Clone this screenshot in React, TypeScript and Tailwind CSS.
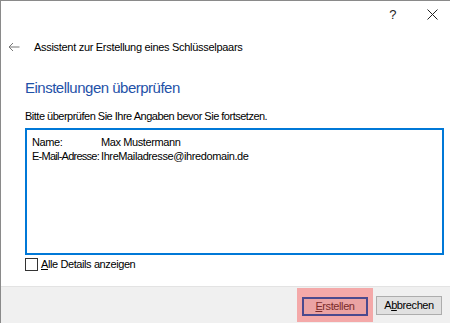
import React, { useState } from 'react';

const font = { fontFamily: '"Liberation Sans", Arial, sans-serif' };

export default function App() {
    const [showAll, setShowAll] = useState(false);

    return (
        <div style={font} className="w-[450px] h-[323px] bg-white border-t border-l border-[#8a8a8a] flex flex-col overflow-hidden text-[#000] tracking-[-0.4px]">
            {/* title bar */}
            <div className="h-[26px] flex justify-end items-center pr-[12px] gap-[31px]">
                <span className="text-[13px] text-[#222] leading-none">?</span>
                <svg width="11" height="11" viewBox="0 0 11 11" className="text-[#222]">
                    <path d="M0.5 0.5 L10.5 10.5 M10.5 0.5 L0.5 10.5" stroke="currentColor" strokeWidth="1" />
                </svg>
            </div>

            {/* header */}
            <div className="h-[40px] flex items-center pl-[7px]">
                <svg width="12" height="10" viewBox="0 0 12 10" className="text-[#777]">
                    <path d="M11.5 5 H1 M5 1 L1 5 L5 9" stroke="currentColor" strokeWidth="1" fill="none" />
                </svg>
                <span className="ml-[14px] text-[11px] tracking-[-0.3px]">Assistent zur Erstellung eines Schlüsselpaars</span>
            </div>

            <div className="px-[24px] flex flex-col">
                <h1 className="text-[15px] text-[#1f52a8] leading-[20px] mt-[11px] tracking-[-0.5px]">Einstellungen überprüfen</h1>
                <p className="text-[11px] mt-[11px] leading-[14px] tracking-[-0.5px]">Bitte überprüfen Sie Ihre Angaben bevor Sie fortsetzen.</p>

                <div className="mt-[5px] w-[419px] h-[127px] border-2 border-[#0078d7] px-[5px] pt-[5px] text-[11px] leading-[14px]">
                    <div className="flex"><span className="w-[69px] whitespace-nowrap">Name:</span><span>Max Mustermann</span></div>
                    <div className="flex"><span className="w-[69px] whitespace-nowrap tracking-[-0.75px]">E-Mail-Adresse:</span><span>IhreMailadresse@ihredomain.de</span></div>
                </div>

                <label className="mt-[1px] flex items-center gap-[3px] text-[11px] cursor-default">
                    <button
                        onClick={() => setShowAll(!showAll)}
                        className="w-[13px] h-[13px] border border-[#333] bg-white flex items-center justify-center"
                    >
                        {showAll && <span className="text-[10px] leading-none">✓</span>}
                    </button>
                    <span><span className="underline">A</span>lle Details anzeigen</span>
                </label>
            </div>

            {/* footer */}
            <div className="mt-auto h-[37px] bg-[#f0f0f0] border-t border-[#e3e3e3] flex items-center justify-end pr-[8px] gap-[3px]">
                <div className="bg-[#f4a9a9] p-[5px]">
                    <button className="w-[66px] h-[19px] border-2 border-[#4b4a8e] bg-[#eba3a3] text-[11px] text-[#7a2a2a] leading-none">
                        <span className="underline">E</span>rstellen
                    </button>
                </div>
                <button className="w-[66px] h-[19px] border border-[#adadad] bg-[#e1e1e1] text-[11px] leading-none">
                    A<span className="underline">b</span>brechen
                </button>
            </div>
        </div>
    );
}
